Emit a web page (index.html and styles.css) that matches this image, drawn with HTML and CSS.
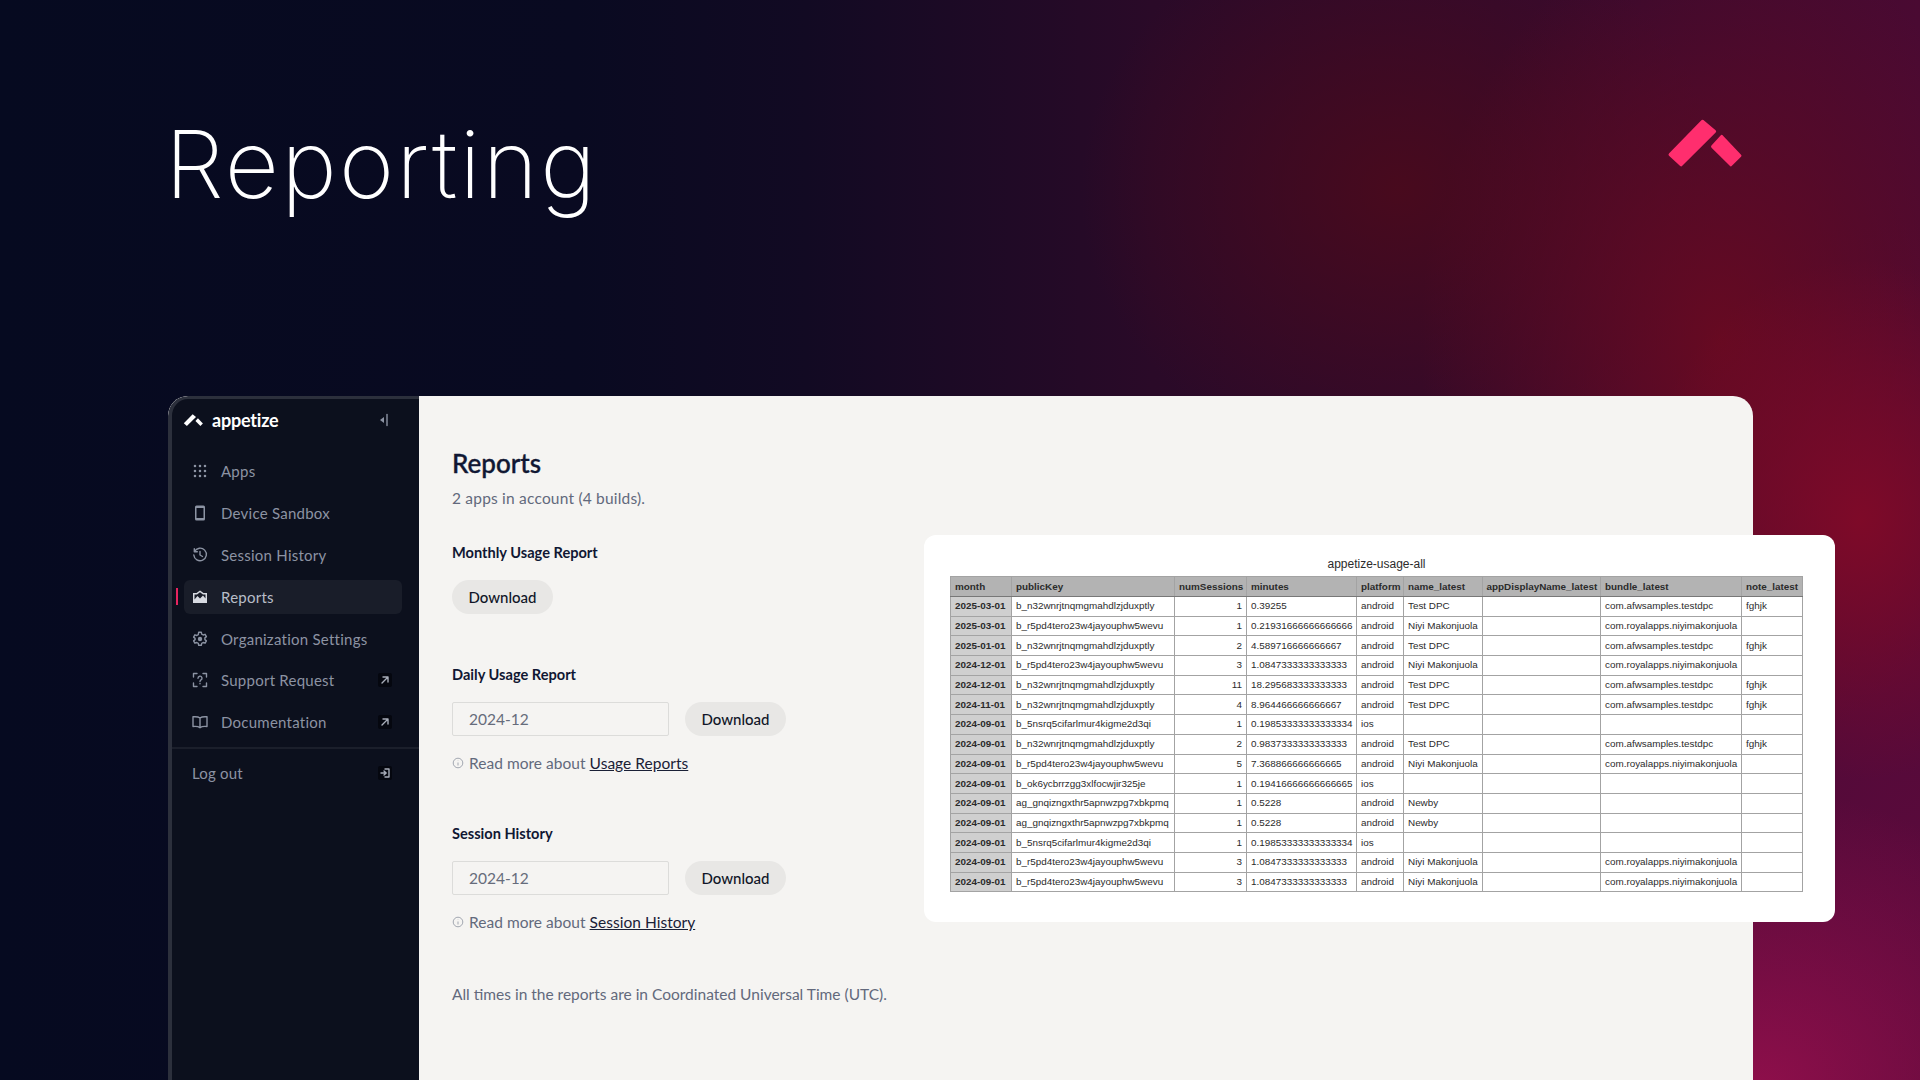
FILE: index.html

```html
<!DOCTYPE html>
<html lang="en">
<head>
  <meta charset="UTF-8" />
  <meta name="viewport" content="width=device-width, initial-scale=1.0" />
  <title>Reporting</title>
  <link rel="stylesheet" href="styles.css">
</head>
<body>
  <header class="hero">
    <h1>Reporting</h1>
    <svg class="hero-logo" viewBox="0 0 76 50" aria-hidden="true">
      <path d="M3 37 L35 4 L47 14 L14 47 Z" />
      <path d="M45 29 L54 19 L72 38 L63 47 Z" />
    </svg>
  </header>

  <div class="window">
    <aside class="sidebar">
      <div class="brand">
        <svg class="brand-logo" viewBox="0 0 76 50" aria-hidden="true">
          <path d="M3 37 L35 4 L47 14 L14 47 Z" />
          <path d="M45 29 L54 19 L72 38 L63 47 Z" />
        </svg>
        <span class="brand-name">appetize</span>
        <svg class="collapse" viewBox="0 0 12 14" aria-hidden="true">
          <path class="fill" d="M6 4 L2 7 L6 10 Z" />
          <path d="M9 1.5 V12.5" />
        </svg>
      </div>

      <nav class="nav">
        <a class="nav-item">
          <svg class="nav-icon" viewBox="0 0 16 16" aria-hidden="true">
            <path class="dots" d="M3 3h.01M8 3h.01M13 3h.01M3 8h.01M8 8h.01M13 8h.01M3 13h.01M8 13h.01M13 13h.01" />
          </svg>
          Apps
        </a>
        <a class="nav-item">
          <svg class="nav-icon" viewBox="0 0 16 16" aria-hidden="true">
            <path class="fill" fill-rule="evenodd" d="M4.500 0.500h7A1.500 1.500 0 0 1 13 2v12a1.500 1.500 0 0 1-1.500 1.500h-7A1.500 1.500 0 0 1 3 14V2A1.500 1.500 0 0 1 4.500 0.500Zm0 2.500v10h7V3Z" />
          </svg>
          Device Sandbox
        </a>
        <a class="nav-item">
          <svg class="nav-icon" viewBox="0 0 16 16" aria-hidden="true">
            <path d="M2.500 4.500A6.300 6.300 0 1 1 1.800 8M2.300 1.800v3h3M8 4.500V8l2.500 1.500" />
          </svg>
          Session History
        </a>
        <a class="nav-item active">
          <svg class="nav-icon" viewBox="0 0 16 16" aria-hidden="true">
            <path class="fill" fill-rule="evenodd" d="M1 4h3.500L8 1.500 11.500 4H15v10H1Zm1.500 6.500L5.500 7 8 9.500 11 6.500l2.500 3V5.500h-2.500L8 3.300 5 5.500H2.500Z" />
          </svg>
          Reports
        </a>
        <a class="nav-item">
          <svg class="nav-icon" viewBox="0 0 16 16" aria-hidden="true">
            <path d="M6.700 1.200h2.600l.4 2 1.500.8 1.900-.7 1.300 2.300-1.500 1.300v1.700l1.500 1.300-1.300 2.300-1.900-.7-1.500.8-.4 2H6.700l-.4-2-1.500-.8-1.900.7-1.300-2.300 1.500-1.300V7.400L1.600 6.100l1.300-2.300 1.900.7 1.500-.8Z" />
            <circle class="fill" cx="8" cy="8" r="2.200" />
          </svg>
          Organization Settings
        </a>
        <a class="nav-item">
          <svg class="nav-icon" viewBox="0 0 16 16" aria-hidden="true">
            <path d="M1.500 5V1.500H5M11 1.500h3.500V5M14.500 11v3.500H11M5 14.500H1.500V11M6 6.200a2 2 0 1 1 3 1.700c-.7.400-1 .8-1 1.600M8 11.500v.3" />
          </svg>
          Support Request
          <span class="nav-end">
            <svg viewBox="0 0 10 10" aria-hidden="true"><path d="M2 8 L8 2 M3 2 H8 V7" /></svg>
          </span>
        </a>
        <a class="nav-item">
          <svg class="nav-icon" viewBox="0 0 16 14" aria-hidden="true">
            <path d="M8 3C6.500 1.800 4 1.500 1 1.800v9.700c3-.3 5.500 0 7 1.200 1.500-1.200 4-1.500 7-1.200V1.800C12 1.500 9.500 1.800 8 3Zm0 0v9.700" />
          </svg>
          Documentation
          <span class="nav-end">
            <svg viewBox="0 0 10 10" aria-hidden="true"><path d="M2 8 L8 2 M3 2 H8 V7" /></svg>
          </span>
        </a>
      </nav>

      <a class="logout">
        Log out
        <span class="nav-end">
          <svg viewBox="0 0 10 10" aria-hidden="true"><path d="M1 5 H6 M4 3 L6.200 5 L4 7 M5 1 H9 V9 H5" /></svg>
        </span>
      </a>
    </aside>

    <main class="content">
      <h2>Reports</h2>
      <p class="muted">2 apps in account (4 builds).</p>

      <section class="report report-monthly">
        <h3>Monthly Usage Report</h3>
        <button class="btn">Download</button>
      </section>

      <section class="report report-daily">
        <h3>Daily Usage Report</h3>
        <div class="report-row">
          <input class="month-input" type="text" value="2024-12" />
          <button class="btn">Download</button>
        </div>
        <p class="read-more">
          <svg class="info" viewBox="0 0 12 12" aria-hidden="true"><circle cx="6" cy="6" r="4.800" /><path d="M6 5.500V8.500M6 3.500v.3" /></svg>
          <span>Read more about <a href="#">Usage Reports</a></span>
        </p>
      </section>

      <section class="report report-session">
        <h3>Session History</h3>
        <div class="report-row">
          <input class="month-input" type="text" value="2024-12" />
          <button class="btn">Download</button>
        </div>
        <p class="read-more">
          <svg class="info" viewBox="0 0 12 12" aria-hidden="true"><circle cx="6" cy="6" r="4.800" /><path d="M6 5.500V8.500M6 3.500v.3" /></svg>
          <span>Read more about <a href="#">Session History</a></span>
        </p>
      </section>

      <p class="muted utc">All times in the reports are in Coordinated Universal Time (UTC).</p>
    </main>
  </div>

  <div class="sheet">
    <div class="sheet-title">appetize-usage-all</div>
    <table>
      <colgroup>
        <col class="c-month"><col class="c-key"><col class="c-num"><col class="c-min"><col class="c-plat">
        <col class="c-name"><col class="c-disp"><col class="c-bundle"><col class="c-note">
      </colgroup>
      <thead>
        <tr><th>month</th><th>publicKey</th><th>numSessions</th><th>minutes</th><th>platform</th><th>name_latest</th><th>appDisplayName_latest</th><th>bundle_latest</th><th>note_latest</th></tr>
      </thead>
      <tbody>
        <tr><th>2025-03-01</th><td>b_n32wnrjtnqmgmahdlzjduxptly</td><td class="num">1</td><td>0.39255</td><td>android</td><td>Test DPC</td><td></td><td>com.afwsamples.testdpc</td><td>fghjk</td></tr>
        <tr><th>2025-03-01</th><td>b_r5pd4tero23w4jayouphw5wevu</td><td class="num">1</td><td>0.21931666666666666</td><td>android</td><td>Niyi Makonjuola</td><td></td><td>com.royalapps.niyimakonjuola</td><td></td></tr>
        <tr><th>2025-01-01</th><td>b_n32wnrjtnqmgmahdlzjduxptly</td><td class="num">2</td><td>4.589716666666667</td><td>android</td><td>Test DPC</td><td></td><td>com.afwsamples.testdpc</td><td>fghjk</td></tr>
        <tr><th>2024-12-01</th><td>b_r5pd4tero23w4jayouphw5wevu</td><td class="num">3</td><td>1.0847333333333333</td><td>android</td><td>Niyi Makonjuola</td><td></td><td>com.royalapps.niyimakonjuola</td><td></td></tr>
        <tr><th>2024-12-01</th><td>b_n32wnrjtnqmgmahdlzjduxptly</td><td class="num">11</td><td>18.295683333333333</td><td>android</td><td>Test DPC</td><td></td><td>com.afwsamples.testdpc</td><td>fghjk</td></tr>
        <tr><th>2024-11-01</th><td>b_n32wnrjtnqmgmahdlzjduxptly</td><td class="num">4</td><td>8.964466666666667</td><td>android</td><td>Test DPC</td><td></td><td>com.afwsamples.testdpc</td><td>fghjk</td></tr>
        <tr><th>2024-09-01</th><td>b_5nsrq5cifarlmur4kigme2d3qi</td><td class="num">1</td><td>0.19853333333333334</td><td>ios</td><td></td><td></td><td></td><td></td></tr>
        <tr><th>2024-09-01</th><td>b_n32wnrjtnqmgmahdlzjduxptly</td><td class="num">2</td><td>0.9837333333333333</td><td>android</td><td>Test DPC</td><td></td><td>com.afwsamples.testdpc</td><td>fghjk</td></tr>
        <tr><th>2024-09-01</th><td>b_r5pd4tero23w4jayouphw5wevu</td><td class="num">5</td><td>7.368866666666665</td><td>android</td><td>Niyi Makonjuola</td><td></td><td>com.royalapps.niyimakonjuola</td><td></td></tr>
        <tr><th>2024-09-01</th><td>b_ok6ycbrrzgg3xlfocwjir325je</td><td class="num">1</td><td>0.19416666666666665</td><td>ios</td><td></td><td></td><td></td><td></td></tr>
        <tr><th>2024-09-01</th><td>ag_gnqizngxthr5apnwzpg7xbkpmq</td><td class="num">1</td><td>0.5228</td><td>android</td><td>Newby</td><td></td><td></td><td></td></tr>
        <tr><th>2024-09-01</th><td>ag_gnqizngxthr5apnwzpg7xbkpmq</td><td class="num">1</td><td>0.5228</td><td>android</td><td>Newby</td><td></td><td></td><td></td></tr>
        <tr><th>2024-09-01</th><td>b_5nsrq5cifarlmur4kigme2d3qi</td><td class="num">1</td><td>0.19853333333333334</td><td>ios</td><td></td><td></td><td></td><td></td></tr>
        <tr><th>2024-09-01</th><td>b_r5pd4tero23w4jayouphw5wevu</td><td class="num">3</td><td>1.0847333333333333</td><td>android</td><td>Niyi Makonjuola</td><td></td><td>com.royalapps.niyimakonjuola</td><td></td></tr>
        <tr><th>2024-09-01</th><td>b_r5pd4tero23w4jayouphw5wevu</td><td class="num">3</td><td>1.0847333333333333</td><td>android</td><td>Niyi Makonjuola</td><td></td><td>com.royalapps.niyimakonjuola</td><td></td></tr>
      </tbody>
    </table>
  </div>
</body>
</html>
```

FILE: styles.css

```css
html, body {
  height: 100%;
}
body {
  margin: 0;
  height: 1080px;
  overflow: hidden;
  position: relative;
  display: flex;
  flex-direction: column;
  font-family: 'Lato', 'Noto Sans', sans-serif;
  background-color: #060a20;
  background-image:
    radial-gradient(ellipse 220px 260px at 1860px 520px, rgba(128, 10, 40, 0.95), rgba(128, 10, 40, 0) 100%),
    radial-gradient(ellipse 340px 300px at 1760px 1090px, rgba(146, 15, 76, 0.95), rgba(146, 15, 76, 0) 100%),
    radial-gradient(ellipse 300px 420px at 1720px 340px, rgba(106, 10, 32, 0.9), rgba(106, 10, 32, 0) 100%),
    radial-gradient(ellipse 320px 280px at 1400px 190px, rgba(78, 10, 26, 0.8), rgba(78, 10, 26, 0) 100%),
    radial-gradient(ellipse 520px 640px at 1920px 860px, rgba(90, 10, 60, 0.95), rgba(90, 10, 60, 0) 100%),
    linear-gradient(90deg, #060a20 0%, #090a21 30%, #120a23 42%, #2a0a28 60%, #330a2c 78%, #4a0a32 100%);
}

/* top title band */
.hero {
  height: 396px;
  flex: none;
  box-sizing: border-box;
  padding: 110px 176px 0 165px;
  display: flex;
  justify-content: space-between;
  align-items: flex-start;
}
h1 {
  margin: 0;
  font-family: 'Inter', sans-serif;
  font-size: 94px;
  font-weight: 200;
  line-height: 108px;
  letter-spacing: 2.2px;
  color: #fff;
}
.hero-logo {
  width: 77px;
  height: 51px;
  margin-top: 7px;
}
.hero-logo path {
  fill: #ff2e6e;
  stroke: #ff2e6e;
  stroke-width: 3;
  stroke-linejoin: round;
}

/* app window */
.window {
  flex: 1;
  margin: 0 167px 0 168px;
  display: flex;
  border-radius: 20px 20px 0 0;
  overflow: hidden;
  background: #f5f4f2;
}
.sidebar {
  width: 251px;
  flex: none;
  box-sizing: border-box;
  background: #0c101d;
  border: 4px solid #2c303c;
  border-width: 3px 0 0 4px;
  border-top-left-radius: 20px;
  padding: 0 12px;
  color: #8c93a3;
}
.sidebar svg {
  fill: none;
  stroke: currentColor;
  stroke-width: 1.4;
  stroke-linecap: round;
  stroke-linejoin: round;
}
.sidebar svg .fill {
  fill: currentColor;
  stroke: none;
}
.brand {
  height: 41px;
  display: flex;
  align-items: center;
  color: #fff;
}
.brand-logo.brand-logo {
  width: 21px;
  height: 14px;
  margin-left: -1px;
  stroke: none;
}
.brand-logo path {
  fill: #fff;
}
.brand-name {
  margin-left: 8px;
  font-size: 18px;
  font-weight: 700;
  letter-spacing: -0.2px;
}
.collapse {
  width: 12px;
  height: 14px;
  margin-left: auto;
  margin-right: 17px;
  color: #8c93a3;
}
.nav {
  margin-top: 14px;
}
.nav-item {
  height: 34px;
  margin-bottom: 7.900px;
  margin-right: 5px;
  display: flex;
  align-items: center;
  padding: 0 10px 0 8px;
  font-size: 15px;
  letter-spacing: 0.25px;
  border-radius: 6px;
  position: relative;
}
.nav-icon {
  width: 16px;
  height: 16px;
  margin-right: 13px;
  flex: none;
}
.nav-icon .dots {
  stroke-width: 2.600;
}
.nav-item.active {
  background: #191d29;
  color: #b8bdc8;
}
.nav-item.active .nav-icon {
  color: #d8dbe2;
}
.nav-item.active::before {
  content: "";
  position: absolute;
  left: -8px;
  top: 8px;
  width: 2px;
  height: 17px;
  background: #e6245f;
}
.nav-end {
  margin-left: auto;
  width: 14px;
  height: 14px;
  display: flex;
  align-items: center;
  justify-content: center;
  background: #05070f;
  border-radius: 2px;
  color: #a8adb9;
}
.nav-end svg {
  width: 10px;
  height: 10px;
}
.logout {
  margin: 0 -12px;
  padding: 0 27px 0 20px;
  height: 47px;
  display: flex;
  align-items: center;
  border-top: 2px solid #1b1f2b;
  font-size: 15px;
  letter-spacing: 0.2px;
}

/* main panel */
.content {
  flex: 1;
  padding: 0 0 0 33px;
  color: #101733;
}
h2 {
  margin: 50px 0 0;
  font-size: 26px;
  line-height: 34px;
  font-weight: 500;
  -webkit-text-stroke: 0.4px #101733;
}
.muted {
  margin: 0;
  font-size: 15.500px;
  line-height: 22px;
  color: #62697c;
}
.content > .muted {
  margin-top: 7px;
  letter-spacing: 0.2px;
}
.content > .utc {
  margin-top: 50px;
  letter-spacing: 0;
}
.report h3 {
  margin: 0 0 16px;
  font-size: 14.600px;
  line-height: 22px;
  font-weight: 700;
}
.report-monthly {
  margin-top: 33px;
}
.report-daily {
  margin-top: 50px;
}
.report-session {
  margin-top: 49px;
}
.report-row {
  display: flex;
  gap: 16px;
}
.btn {
  width: 101px;
  height: 34px;
  padding: 0;
  border: none;
  border-radius: 17px;
  background: #e8e7e5;
  color: #111628;
  font-family: inherit;
  font-size: 15px;
  font-weight: 500;
}
.month-input {
  width: 217px;
  height: 34px;
  box-sizing: border-box;
  padding: 0 16px;
  border: 1px solid #dcdcda;
  border-radius: 2px;
  background: #f5f4f2;
  color: #666c7b;
  font-family: inherit;
  font-size: 15.500px;
}
.read-more {
  margin: 16px 0 0;
  display: flex;
  align-items: center;
  font-size: 15.500px;
  line-height: 22px;
  letter-spacing: 0.03px;
  color: #62697c;
}
.read-more a {
  color: #1a2036;
}
.info {
  width: 12px;
  height: 12px;
  margin-right: 5px;
  fill: none;
  stroke: #a2a7b1;
  stroke-width: 1;
}

/* screenshot of the csv, sits over the window edge */
.sheet {
  position: absolute;
  left: 924px;
  top: 535px;
  width: 911px;
  height: 387px;
  box-sizing: border-box;
  padding: 20px 32px 0 26px;
  background: #fff;
  border-radius: 12px;
  font-family: 'Liberation Sans', Arial, sans-serif;
  color: #2b2b2b;
}
.sheet-title {
  text-align: center;
  font-size: 12px;
  line-height: 18px;
  margin-bottom: 3px;
}
table {
  table-layout: fixed;
  width: 852px;
  border-collapse: collapse;
  font-size: 9.900px;
}
tr {
  height: 19.700px;
}
th, td {
  box-sizing: border-box;
  padding: 0 4px 1px;
  border: 1px solid #a3a3a3;
  text-align: left;
  white-space: nowrap;
  font-weight: 400;
}
thead th {
  background: #b3b3b3;
  font-weight: 700;
  border-bottom-color: #777;
  height: 20px;
}
tbody th {
  background: #cfcfcf;
  font-weight: 700;
}
td.num {
  text-align: right;
}
.c-month { width: 61px; }
.c-key { width: 163px; }
.c-num { width: 72px; }
.c-min { width: 110px; }
.c-plat { width: 47px; }
.c-name { width: 78.500px; }
.c-disp { width: 118.500px; }
.c-bundle { width: 141px; }
.c-note { width: 61px; }
```
